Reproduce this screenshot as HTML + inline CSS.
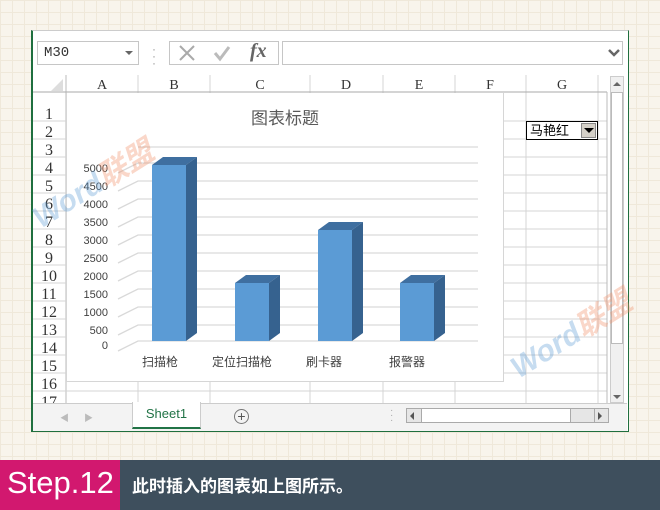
<!DOCTYPE html>
<html><head><meta charset="utf-8"><style>
*{margin:0;padding:0;box-sizing:border-box}
body{width:660px;height:510px;overflow:hidden;position:relative;font-family:"Liberation Sans","Noto Sans CJK SC",sans-serif;
background-color:#f8f4ec;background-image:linear-gradient(#efe8da 1px,transparent 1px),linear-gradient(90deg,#efe8da 1px,transparent 1px);background-size:12px 12px}
.a{position:absolute}
.mono{font-family:"Liberation Mono","DejaVu Sans Mono",monospace}
</style></head><body>
<div class="a" style="left:31px;top:30px;width:598px;height:402px;background:#fff;border:1px solid #1f6f3f;border-top:1px solid #ccc;border-left:2px solid #1f6f3f"></div>
<div class="a mono" style="left:37px;top:41px;width:102px;height:24px;border:1px solid #c6c6c6;font-size:14px;line-height:22px;padding-left:6px;color:#333">M30</div>
<div class="a" style="left:125px;top:51px;border-left:4px solid transparent;border-right:4px solid transparent;border-top:4px solid #666"></div>
<div class="a" style="left:152px;top:46px;color:#999;font-size:12px;line-height:7px">·<br>·<br>·</div>
<div class="a" style="left:169px;top:41px;width:110px;height:24px;border:1px solid #c6c6c6"></div>
<svg class="a" style="left:169px;top:41px" width="110" height="24"><path d="M11 5l14 14M25 5L11 19" stroke="#aaa" stroke-width="2"/><path d="M46 12l5 6 9-12" stroke="#bbb" stroke-width="3" fill="none"/></svg>
<div class="a" style="left:250px;top:40px;font-family:'Liberation Serif',serif;font-style:italic;font-weight:bold;font-size:20px;color:#666">fx</div>
<div class="a" style="left:282px;top:41px;width:341px;height:24px;border:1px solid #c6c6c6"></div>
<svg class="a" style="left:608px;top:49px" width="12" height="8"><path d="M1 1l5 5 5-5" stroke="#666" stroke-width="2.5" fill="none"/></svg>
<svg class="a" style="left:33px;top:75px" width="590" height="328" font-family="Liberation Serif,DejaVu Serif,serif" font-size="15" fill="#333">
<rect x="0" y="0" width="574" height="17" fill="#fff"/>
<path d="M30 16L30 4L18 16Z" fill="#ddd"/>
<g stroke="#d4d4d4">
<line x1="105" y1="0" x2="105" y2="328"/><line x1="177" y1="0" x2="177" y2="328"/><line x1="277" y1="0" x2="277" y2="328"/><line x1="350" y1="0" x2="350" y2="328"/><line x1="422" y1="0" x2="422" y2="328"/><line x1="493" y1="0" x2="493" y2="328"/><line x1="565" y1="0" x2="565" y2="328"/>
<line x1="33" y1="0" x2="33" y2="328" stroke="#bbb"/>
<line x1="0" y1="17" x2="574" y2="17" stroke="#aaa"/>
<line x1="0" y1="46" x2="574" y2="46"/><line x1="0" y1="64" x2="574" y2="64"/><line x1="0" y1="82" x2="574" y2="82"/><line x1="0" y1="100" x2="574" y2="100"/><line x1="0" y1="118" x2="574" y2="118"/><line x1="0" y1="136" x2="574" y2="136"/><line x1="0" y1="154" x2="574" y2="154"/><line x1="0" y1="172" x2="574" y2="172"/><line x1="0" y1="190" x2="574" y2="190"/><line x1="0" y1="208" x2="574" y2="208"/><line x1="0" y1="226" x2="574" y2="226"/><line x1="0" y1="244" x2="574" y2="244"/><line x1="0" y1="262" x2="574" y2="262"/><line x1="0" y1="280" x2="574" y2="280"/><line x1="0" y1="298" x2="574" y2="298"/><line x1="0" y1="316" x2="574" y2="316"/>
<line x1="574" y1="17" x2="574" y2="328" stroke="#bbb"/>
</g>
<g text-anchor="middle" font-size="14"><text x="69" y="14">A</text><text x="141" y="14">B</text><text x="227" y="14">C</text><text x="313" y="14">D</text><text x="386" y="14">E</text><text x="457" y="14">F</text><text x="529" y="14">G</text></g>
<g text-anchor="middle" font-size="16"><text x="16" y="44">1</text><text x="16" y="62">2</text><text x="16" y="80">3</text><text x="16" y="98">4</text><text x="16" y="116">5</text><text x="16" y="134">6</text><text x="16" y="152">7</text><text x="16" y="170">8</text><text x="16" y="188">9</text><text x="16" y="206">10</text><text x="16" y="224">11</text><text x="16" y="242">12</text><text x="16" y="260">13</text><text x="16" y="278">14</text><text x="16" y="296">15</text><text x="16" y="314">16</text><text x="16" y="332">17</text></g>
</svg>
<div class="a" style="left:526px;top:121px;width:72px;height:19px;border:1px solid #000;background:#fff;font-size:13px;line-height:17px;padding-left:3px;color:#000">马艳红</div>
<div class="a" style="left:581px;top:123px;width:15px;height:15px;background:#d4d0c8;border:1px solid #888"></div>
<div class="a" style="left:584px;top:128px;border-left:5px solid transparent;border-right:5px solid transparent;border-top:5px solid #000"></div>
<div class="a" style="left:610px;top:76px;width:14px;height:327px;background:#f0f0f0;border:1px solid #ccc"></div>
<div class="a" style="left:611px;top:92px;width:12px;height:252px;background:#fff;border:1px solid #bbb"></div>
<div class="a" style="left:613px;top:82px;border-left:4px solid transparent;border-right:4px solid transparent;border-bottom:4px solid #666"></div>
<div class="a" style="left:613px;top:395px;border-left:4px solid transparent;border-right:4px solid transparent;border-top:4px solid #666"></div>
<div class="a" style="left:66px;top:93px;width:438px;height:289px;background:#fff;border:1px solid #d6d6d6;border-top:none"></div>
<div class="a" style="left:66px;top:104px;width:438px;text-align:center;font-size:17px;color:#595959">图表标题</div>
<svg class="a" style="left:66px;top:93px" width="438" height="289" font-family="Liberation Sans,sans-serif" font-size="11" fill="#404040">
<g stroke="#d9d9d9" fill="none" stroke-width="1.3">
<path d="M72 54L412 54"/>
<path d="M52 80L72 70L412 70"/><path d="M52 98L72 88L412 88"/><path d="M52 116L72 106L412 106"/><path d="M52 134L72 124L412 124"/><path d="M52 152L72 142L412 142"/><path d="M52 170L72 160L412 160"/><path d="M52 188L72 178L412 178"/><path d="M52 206L72 196L412 196"/><path d="M52 224L72 214L412 214"/><path d="M52 242L72 232L412 232"/><path d="M52 258L72 248L412 248"/>
</g>
<g text-anchor="end"><text x="42" y="79">5000</text><text x="42" y="97">4500</text><text x="42" y="115">4000</text><text x="42" y="133">3500</text><text x="42" y="151">3000</text><text x="42" y="169">2500</text><text x="42" y="187">2000</text><text x="42" y="205">1500</text><text x="42" y="223">1000</text><text x="42" y="241">500</text><text x="42" y="256">0</text></g>
<g>
<path d="M86 72L97 64L131 64L120 72Z" fill="#3f6fa0"/><path d="M120 72L131 64L131 240L120 248Z" fill="#36628f"/><rect x="86" y="72" width="34" height="176" fill="#5b9bd5"/>
<path d="M169 190L180 182L214 182L203 190Z" fill="#3f6fa0"/><path d="M203 190L214 182L214 240L203 248Z" fill="#36628f"/><rect x="169" y="190" width="34" height="58" fill="#5b9bd5"/>
<path d="M252 137L263 129L297 129L286 137Z" fill="#3f6fa0"/><path d="M286 137L297 129L297 240L286 248Z" fill="#36628f"/><rect x="252" y="137" width="34" height="111" fill="#5b9bd5"/>
<path d="M334 190L345 182L379 182L368 190Z" fill="#3f6fa0"/><path d="M368 190L379 182L379 240L368 248Z" fill="#36628f"/><rect x="334" y="190" width="34" height="58" fill="#5b9bd5"/>
</g>
<g font-size="12" text-anchor="middle" font-family="Noto Sans CJK SC,sans-serif" fill="#404040"><text x="94" y="273">扫描枪</text><text x="176" y="273">定位扫描枪</text><text x="258" y="273">刷卡器</text><text x="341" y="273">报警器</text></g>
</svg>
<div class="a" style="left:44px;top:234px;transform:rotate(-32deg);transform-origin:left bottom;font-size:30px;line-height:30px;margin-top:-30px;font-weight:bold;font-style:italic;color:rgba(91,155,213,.35);white-space:nowrap">Word<span style="color:rgba(240,140,100,.35)">联盟</span></div>
<div class="a" style="left:522px;top:384px;transform:rotate(-32deg);transform-origin:left bottom;font-size:30px;line-height:30px;margin-top:-30px;font-weight:bold;font-style:italic;color:rgba(91,155,213,.35);white-space:nowrap">Word<span style="color:rgba(240,140,100,.35)">联盟</span></div>
<div class="a" style="left:33px;top:403px;width:594px;height:28px;background:#f3f3f3;border-top:1px solid #ccc"></div>
<div class="a" style="left:60px;top:411px;color:#bbb;font-size:9px">◀&nbsp;&nbsp;&nbsp;&nbsp;&nbsp;&nbsp;▶</div>
<div class="a" style="left:132px;top:402px;width:69px;height:27px;background:#fff;border-left:1px solid #ccc;border-right:1px solid #ccc;border-bottom:2px solid #217346;color:#217346;font-size:13px;text-align:center;line-height:24px">Sheet1</div>
<div class="a" style="left:234px;top:409px;width:15px;height:15px;border:1px solid #777;border-radius:50%;color:#555;font-size:14px;line-height:12px;text-align:center">+</div>
<div class="a" style="left:390px;top:408px;color:#aaa;font-size:10px;line-height:5px">·<br>·<br>·</div>
<div class="a" style="left:406px;top:408px;width:203px;height:15px;background:#e6e6e6;border:1px solid #aaa"></div>
<div class="a" style="left:421px;top:409px;width:150px;height:13px;background:#fff;border-left:1px solid #aaa;border-right:1px solid #aaa"></div>
<div class="a" style="left:410px;top:412px;border-top:4px solid transparent;border-bottom:4px solid transparent;border-right:4px solid #555"></div>
<div class="a" style="left:598px;top:412px;border-top:4px solid transparent;border-bottom:4px solid transparent;border-left:4px solid #555"></div>
<div class="a" style="left:594px;top:408px;width:15px;height:15px;border-left:1px solid #aaa"></div>
<div class="a" style="left:0;top:460px;width:120px;height:50px;background:#d2186f;color:#fff;font-size:31px;line-height:46px;padding-left:7px">Step.12</div>
<div class="a" style="left:120px;top:460px;width:540px;height:50px;background:#3e4f5d;color:#fff;font-size:17px;font-weight:bold;line-height:50px;padding-left:12px;font-family:'Noto Sans CJK SC',sans-serif">此时插入的图表如上图所示。</div>
</body></html>
